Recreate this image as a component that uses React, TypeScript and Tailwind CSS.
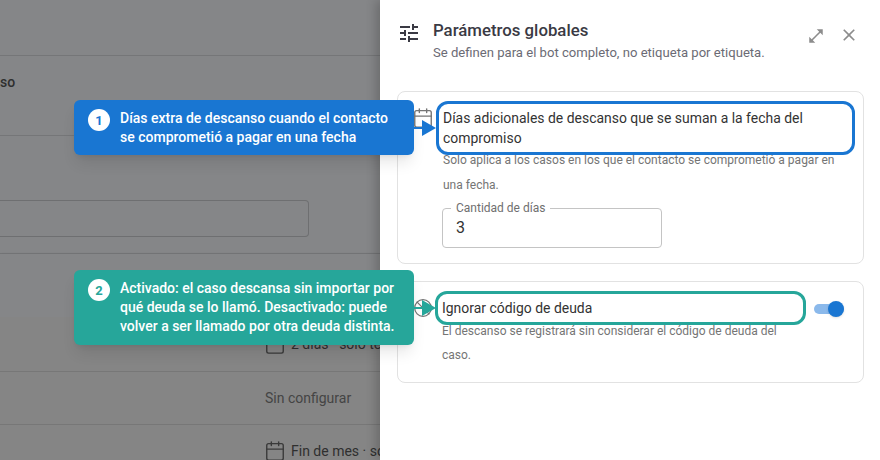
import { Calendar, Ban } from "lucide-react";
import { MdTune, MdOpenInFull, MdClose } from "react-icons/md";

const Callout = ({ n, color, top, arrowTop, children }: { n: number; color: string; top: string; arrowTop: string; children: React.ReactNode }) => (
  <div className={`absolute left-[74px] w-[340px] rounded-md pl-[46px] pr-2 pt-[9px] text-[14px] leading-[19px] font-medium text-white shadow-lg ${color} ${top}`}>
    <span className="absolute left-[14px] top-[9px] flex h-[22px] w-[22px] items-center justify-center rounded-full bg-white text-[13px] font-bold">
      <span className={n === 1 ? "text-[#1976d2]" : "text-[#26a69a]"}>{n}</span>
    </span>
    {children}
    <svg className={`absolute left-full h-[16px] w-[22px] ${arrowTop}`} viewBox="0 0 22 16">
      <path d="M0 7h8V0l14 8-14 8V9H0z" fill="currentColor" className={n === 1 ? "text-[#1976d2]" : "text-[#26a69a]"} />
    </svg>
  </div>
);

export default function App() {
  return (
    <div className="relative flex h-[460px] w-[880px] overflow-hidden bg-white font-['Roboto',sans-serif]">
      {/* Dimmed page behind the drawer */}
      <div className="flex w-[380px] shrink-0 flex-col overflow-hidden bg-[#858688] text-[#2f2f2f]">
        <div className="h-[56px] shrink-0 border-b border-[#757678]" />
        <div className="h-[80px] shrink-0 border-b border-[#757678] pt-[16px] text-[14px] font-medium leading-5">so</div>
        <div className="h-[118px] shrink-0 border-b border-[#757678] pt-[64px]">
          <div className="h-[37px] w-[309px] rounded-r border border-l-0 border-[#6e6f71]" />
        </div>
        <div className="h-[63px] shrink-0 shadow-[0_2px_4px_rgba(0,0,0,0.2)]" />
        <div className="flex h-[55px] shrink-0 items-center gap-[5px] border-b border-[#777777] bg-[#858585] pl-[264px] text-[14px] whitespace-nowrap">
          <Calendar size={22} strokeWidth={1.5} className="shrink-0 text-[#3a3a3a]" />
          2 días · solo te
        </div>
        <div className="flex h-[53px] shrink-0 items-center border-b border-[#777777] bg-[#858585] pl-[265px] text-[14px] text-[#444444]">Sin configurar</div>
        <div className="flex-1 bg-[#858585] pl-[264px] pt-[15px] text-[14px] whitespace-nowrap">
          <div className="flex items-center gap-[5px]">
            <Calendar size={22} strokeWidth={1.5} className="shrink-0 text-[#3a3a3a]" />
            Fin de mes · solo
          </div>
        </div>
      </div>

      {/* Drawer */}
      <div className="relative flex w-[500px] flex-col bg-white pl-[17px] pr-[16px] shadow-[-4px_0_10px_rgba(0,0,0,0.2)]">
        <div className="flex h-[91px] shrink-0 items-start">
          <MdTune size={24} className="mt-[21px] shrink-0 text-[#3a3a44]" />
          <div className="ml-[12px] flex-1 pt-[20px]">
            <div className="text-[16.8px] font-medium leading-5 text-[#3a3a44]">Parámetros globales</div>
            <div className="mt-[3px] text-[13.1px] leading-5 text-[#6b6b74]">Se definen para el bot completo, no etiqueta por etiqueta.</div>
          </div>
          <MdOpenInFull size={18} className="mt-[27px] text-[#8c8c8c]" />
          <MdClose size={20} className="mt-[25px] ml-[14px] mr-[5px] text-[#8c8c8c]" />
        </div>

        <div className="flex h-[173px] shrink-0 rounded-lg border border-[#e2e2e2] pl-[14px] pt-[9px] pr-[8px]">
          <Calendar size={22} strokeWidth={1.5} className="mt-[6px] shrink-0 text-[#757575]" />
          <div className="ml-[2px] flex-1">
            <div className="relative rounded-[12px] border-[3px] border-[#1976d2] bg-white px-[4px] pt-[4px] pb-[4px] text-[13.95px] leading-[20px] text-[#333333]">
              Días adicionales de descanso que se suman a la fecha del compromiso
            </div>
            <p className="-mt-[7px] pl-[7px] pr-3 text-[12px] leading-[25px] text-[#757575]">
              Solo aplica a los casos en los que el contacto se comprometió a pagar en una fecha.
            </p>
            <div className="relative mt-[10px] ml-[6px] flex h-[40px] w-[220px] items-center rounded border border-[#c4c4c4] pl-[13px] text-[16px] text-[#333333]">
              <span className="absolute left-[8px] top-[-9px] bg-white px-[5px] text-[12px] leading-4 text-[#6f6f6f]">Cantidad de días</span>
              3
            </div>
          </div>
        </div>

        <div className="mt-[17px] flex h-[102px] shrink-0 rounded-lg border border-[#e2e2e2] pl-[15px] pt-[9px] pr-[19px]">
          <Ban size={20} strokeWidth={1.5} className="mt-[7px] shrink-0 text-[#757575]" />
          <div className="ml-[2px] flex-1">
            <div className="relative rounded-[12px] border-[3px] border-[#26a69a] bg-white px-[4px] pt-[4px] pb-[3px] text-[13.95px] leading-[21px] text-[#333333]">
              Ignorar código de deuda
            </div>
            <p className="-mt-[6px] pl-[7px] text-[12px] leading-[24px] text-[#757575]">
              El descanso se registrará sin considerar el código de deuda del caso.
            </p>
          </div>
          <div className="relative mt-[13px] ml-[8px] h-[10px] w-[30px] shrink-0 rounded-full bg-[#8bb9eb]">
            <span className="absolute right-0 top-[-3px] h-4 w-4 rounded-full bg-[#1976d2] shadow" />
          </div>
        </div>
      </div>

      <Callout n={1} color="bg-[#1976d2] h-[55px]" top="top-[100px]" arrowTop="top-[20px]">
        Días extra de descanso cuando el contacto se comprometió a pagar en una fecha
      </Callout>
      <Callout n={2} color="bg-[#26a69a] h-[75px]" top="top-[270px]" arrowTop="top-[30px]">
        Activado: el caso descansa sin importar por qué deuda se lo llamó. Desactivado: puede volver a ser llamado por otra deuda distinta.
      </Callout>
    </div>
  );
}
